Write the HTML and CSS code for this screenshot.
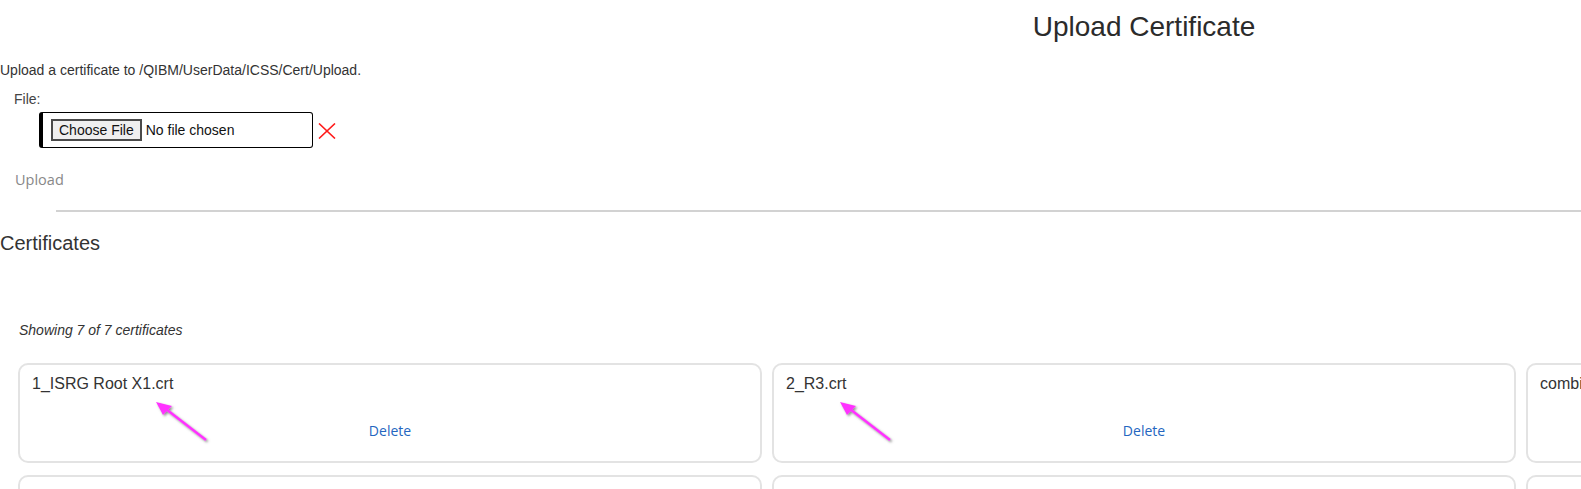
FILE: index.html
```html
<!DOCTYPE html>
<html lang="en">
<head>
  <meta charset="UTF-8">
  <meta name="viewport" content="width=device-width,initial-scale=1.0">
  <title>Upload Certificate</title>
  <link rel="stylesheet" href="styles.css">
</head>
<body>
  <div class="page">
    <h1>Upload Certificate</h1>

    <!-- UPLOAD FORM -->
    <p class="intro">Upload a certificate to /QIBM/UserData/ICSS/Cert/Upload.</p>
    <form class="upload" onsubmit="event.preventDefault()">
      <div class="field-label">File:</div>
      <div class="file-row">
        <label class="file-box">
          <span class="file-btn">Choose File</span>
          <span class="file-name">No file chosen</span>
        </label>
        <svg class="clear" width="18" height="16" viewBox="0 0 18 16" aria-label="clear">
          <path d="M1 0.5L17 15.5M17 0.5L1 15.5" stroke="#ff1a1a" stroke-width="1.6" fill="none"/>
        </svg>
      </div>
      <button type="submit" class="upload-btn" disabled>Upload</button>
    </form>

    <hr class="divider">

    <!-- CERTIFICATE LIST -->
    <h2>Certificates</h2>
    <p class="count">Showing 7 of 7 certificates</p>

    <div class="cards">
      <div class="card">
        <div class="card-name">1_ISRG Root X1.crt</div>
        <a class="card-del" href="#">Delete</a>
        <svg class="pointer" width="70" height="50" viewBox="0 0 70 50"><use href="#arrow"/></svg>
      </div>
      <div class="card">
        <div class="card-name">2_R3.crt</div>
        <a class="card-del" href="#">Delete</a>
        <svg class="pointer pointer-short" width="70" height="50" viewBox="0 0 70 50"><use href="#arrow"/></svg>
      </div>
      <div class="card">
        <div class="card-name">combined.crt</div>
        <a class="card-del" href="#">Delete</a>
      </div>
      <div class="card">
        <div class="card-name">ibm_root.crt</div>
        <a class="card-del" href="#">Delete</a>
      </div>
      <div class="card">
        <div class="card-name">intermediate.crt</div>
        <a class="card-del" href="#">Delete</a>
      </div>
      <div class="card">
        <div class="card-name">server.crt</div>
        <a class="card-del" href="#">Delete</a>
      </div>
      <div class="card">
        <div class="card-name">trusted_ca.crt</div>
        <a class="card-del" href="#">Delete</a>
      </div>
    </div>
  </div>

  <svg width="0" height="0" class="defs">
    <defs>
      <filter id="shade" x="-20%" y="-20%" width="150%" height="150%">
        <feDropShadow dx="1.5" dy="1.5" stdDeviation="1" flood-color="#777" flood-opacity="0.8"/>
      </filter>
      <g id="arrow" filter="url(#shade)">
        <line x1="8" y1="6" x2="52" y2="40" stroke="#ff33ff" stroke-width="2.6"/>
        <polygon points="2,2 18,6 9,15" fill="#ff33ff"/>
      </g>
    </defs>
  </svg>
</body>
</html>
```

FILE: styles.css
```css
*{box-sizing:border-box}
body{margin:0;overflow:hidden;font-family:"Liberation Sans",Arial,sans-serif;color:#333;background:#fff}
.page{width:2288px}
h1{margin:0;padding-top:11px;font-size:28px;line-height:32px;font-weight:normal;text-align:center;color:#2b2b2b}
.intro{margin:19px 0 0;font-size:14px;line-height:16px}
.upload{display:flex;flex-direction:column;align-items:flex-start}
.field-label{margin:13px 0 0 14px;font-size:14px;line-height:16px;color:#444}
.file-row{display:flex;align-items:center;gap:5px;margin:5px 0 0 39px}
.file-box{display:flex;align-items:center;gap:4px;width:274px;height:36px;padding-left:8px;border:1px solid #000;border-left:4px solid #000;border-radius:3px;cursor:pointer}
.file-btn{height:22px;padding:0 6px;border:2px solid #4a4a4a;background:#efefef;font-size:14px;line-height:18px;color:#111}
.file-name{font-size:14px;color:#111}
.clear{display:block;margin-top:1px}
.upload-btn{margin:23px 0 0 15px;padding:0;border:none;background:none;font-family:"Open Sans","Liberation Sans",sans-serif;font-size:14.5px;line-height:17px;color:#888}
.divider{margin:22px 0 0 56px;border:none;border-top:2px solid #d2d2d2}
h2{margin:19px 0 0;font-size:20px;line-height:24px;font-weight:normal}
.count{margin:67px 0 0 19px;font-size:14px;line-height:16px;font-style:italic;color:#333}
.cards{display:grid;grid-template-columns:repeat(3,744px);gap:12px 10px;margin:25px 0 0 18px}
.card{position:relative;display:flex;flex-direction:column;height:100px;padding:10px 12px;border:2px solid #e3e3e3;border-radius:10px}
.card-name{font-size:16px;line-height:18px;color:#333}
.card-del{align-self:center;margin-top:29px;font-family:"Open Sans","Liberation Sans",sans-serif;font-size:14px;line-height:17px;color:#2466c0;text-decoration:none}
.pointer{position:absolute;left:134px;top:35px;pointer-events:none}
.pointer-short{left:64px}
.defs{position:absolute}
```
